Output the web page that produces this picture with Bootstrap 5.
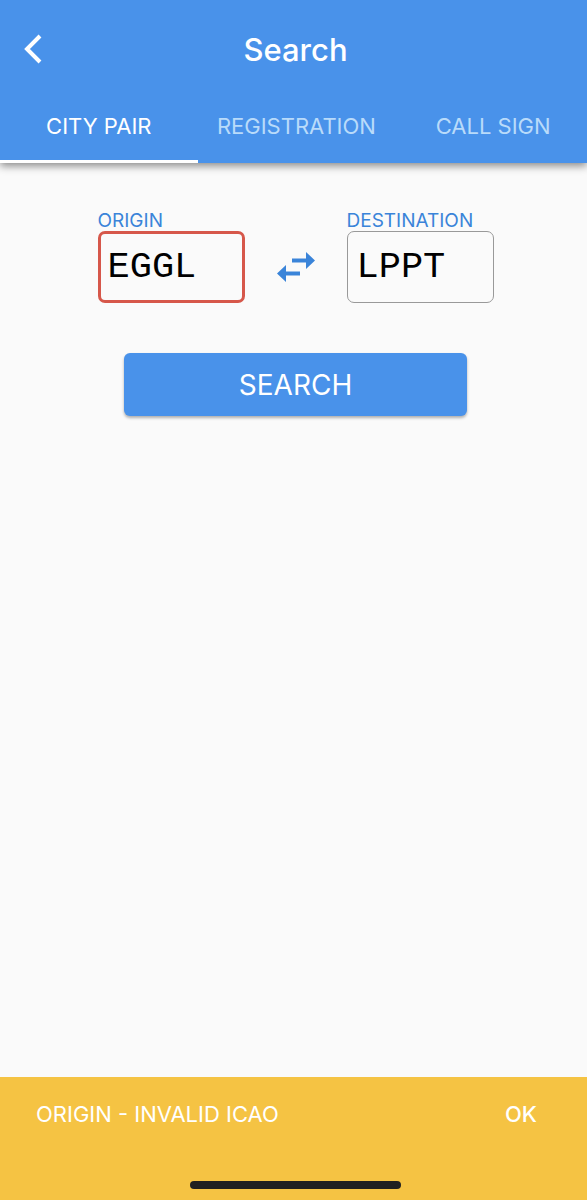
<!DOCTYPE html>
<html lang="en">
<head>
<meta charset="utf-8">
<meta name="viewport" content="width=device-width, initial-scale=1">
<title>Search</title>
<link rel="stylesheet" href="https://cdn.jsdelivr.net/npm/bootstrap@5.3.0/dist/css/bootstrap.min.css">
<style>
  :root { --sky: #4992ea; --link: #3a84d9; --warn: #f5c343; }
  body { font-family: Inter, "Liberation Sans", sans-serif; background: #fafafa; }
  .app-header { background: var(--sky); box-shadow: 0 3px 8px rgba(0,0,0,.45); }
  .title-bar { height: 100px; }
  .title-bar h1 { font-size: 31px; line-height: 40px; font-weight: 500; }
  .back-btn { width: 64px; padding-bottom: 2px; }
  .tab-row .nav-link { width: 34%; height: 63px; padding: 0 0 8px; border-radius: 0; font-size: 22px; line-height: 30px; color: #b9dbfa; border-bottom: 3px solid transparent; white-space: nowrap; }
  .tab-row .nav-link:last-child { width: 33%; padding-left: 4px; }
  .tab-row .nav-link.active { color: #fff; border-bottom-color: #fff; }
  .pair { padding-top: 48px; }
  .field { width: 147px; }
  .field label { font-size: 19px; line-height: 20px; color: var(--link); }
  .code-input { height: 72px; padding: 0 9px; font-family: "Liberation Mono", monospace; font-size: 37px; color: #000; background: transparent; border: 1px solid #999; border-radius: 7px; }
  .code-input.is-wrong { padding: 0 7px; border: 3px solid #d6574a; }
  .swap-slot { width: 102px; height: 72px; }
  .search-btn { width: 343px; height: 63px; margin-top: 50px; background: var(--sky); color: #fff; font-size: 28px; line-height: 40px; border: 0; border-radius: 6px; box-shadow: 0 2px 3px rgba(0,0,0,.3); }
  .notice { background: var(--warn); height: 123px; font-size: 22px; line-height: 30px; color: #fff; padding: 22px 32px 11px 36px; }
  .notice button { color: #fff; font-size: 22px; line-height: 30px; margin-right: 18px; }
  .home-bar { width: 211px; height: 8px; background: #202020; }
</style>
</head>
<body class="d-flex flex-column min-vh-100">
<header class="app-header">
  <div class="title-bar d-flex align-items-center ps-1">
    <button class="back-btn btn border-0 px-0 pt-0" type="button" aria-label="Back">
      <svg class="me-2" width="22" height="32" viewBox="0 0 22 32" fill="none" stroke="#fff" stroke-width="4"><path d="M19 3 6 16l13 13"/></svg>
    </button>
    <h1 class="flex-fill text-center text-white m-0">Search</h1>
    <span class="back-btn"></span>
  </div>
  <nav class="tab-row nav flex-nowrap">
    <a class="nav-link d-flex align-items-center justify-content-center active" href="#" aria-current="page">CITY PAIR</a>
    <a class="nav-link d-flex align-items-center justify-content-center" href="#">REGISTRATION</a>
    <a class="nav-link d-flex align-items-center justify-content-center" href="#">CALL SIGN</a>
  </nav>
</header>
<main class="flex-fill ps-1">
  <form class="d-flex flex-column align-items-center">
    <div class="pair w-100 d-flex justify-content-center align-items-end">
      <div class="field d-flex flex-column">
        <label for="origin">ORIGIN</label>
        <input class="code-input w-100 is-wrong" id="origin" type="text" value="EGGL" maxlength="4">
      </div>
      <button class="swap-slot btn border-0 p-0" type="button" aria-label="Swap origin and destination">
        <svg width="38" height="30" viewBox="0 0 38 30" fill="#3a84d9"><path d="M29 0v6.500H15v4h14V17l9-8.500ZM9 13v6.500h14v4H9V30l-9-8.500Z"/></svg>
      </button>
      <div class="field d-flex flex-column">
        <label for="destination">DESTINATION</label>
        <input class="code-input w-100" id="destination" type="text" value="LPPT" maxlength="4">
      </div>
    </div>
    <button class="search-btn btn" type="submit">SEARCH</button>
  </form>
</main>
<footer class="notice d-flex flex-column justify-content-between" role="alert">
  <div class="d-flex justify-content-between">
    <span>ORIGIN - INVALID ICAO</span>
    <button class="btn border-0 p-0 fw-medium" type="button">OK</button>
  </div>
  <div class="home-bar rounded-pill mx-auto"></div>
</footer>
<script src="https://cdn.jsdelivr.net/npm/bootstrap@5.3.0/dist/js/bootstrap.bundle.min.js"></script>
</body>
</html>
